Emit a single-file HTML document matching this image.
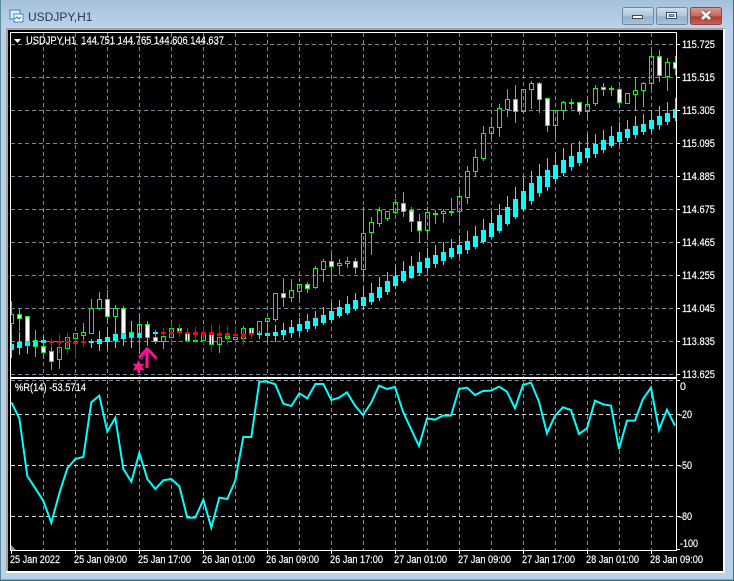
<!DOCTYPE html>
<html><head><meta charset="utf-8"><style>
html,body{margin:0;padding:0;background:#b9d1e8;width:734px;height:581px;overflow:hidden}
svg{display:block}
text{font-family:"Liberation Sans",sans-serif;font-size:10.6px;fill:#fff;stroke:#fff;stroke-width:.18px}
</style></head><body>
<svg id="s" xmlns="http://www.w3.org/2000/svg" width="734" height="581" viewBox="0 0 734 581">
<defs>
<linearGradient id="bg" x1="0" y1="0" x2="0" y2="1"><stop offset="0" stop-color="#a4c1da"/><stop offset="1" stop-color="#bcd3e9"/></linearGradient>
<linearGradient id="btn" x1="0" y1="0" x2="0" y2="1"><stop offset="0" stop-color="#cfdeeb"/><stop offset=".5" stop-color="#aec6dc"/><stop offset=".55" stop-color="#93b2cf"/><stop offset="1" stop-color="#a9c4dc"/></linearGradient>
<linearGradient id="cls" x1="0" y1="0" x2="0" y2="1"><stop offset="0" stop-color="#dc9a90"/><stop offset=".5" stop-color="#c9675b"/><stop offset=".55" stop-color="#b03a2e"/><stop offset="1" stop-color="#c8675a"/></linearGradient>
<clipPath id="mc"><rect x="11" y="33" width="665" height="344"/></clipPath>
<clipPath id="sc"><rect x="11" y="380" width="665" height="170"/></clipPath>
</defs>
<rect width="734" height="581" fill="#b9d1e8"/>
<rect width="734" height="28" fill="url(#bg)"/>
<rect x="0" y="0" width="1" height="581" fill="#5d8a9c"/>
<rect x="733" y="0" width="1" height="581" fill="#3f6f80"/>
<rect x="0" y="580" width="734" height="1" fill="#2f6c7c"/>
<rect x="1" y="579" width="732" height="1" fill="#7fb0c4"/>
<!-- title icon -->
<rect x="10" y="10" width="10" height="9" fill="#dfeefa" stroke="#3a87c8"/>
<rect x="14" y="14" width="9" height="8" fill="#fff" stroke="#3a87c8"/>
<path d="M15 19l2-2 2 2 2-2" fill="none" stroke="#2f6fb0"/>
<text x="28" y="21" style="font-size:12px;fill:#26384a;stroke:none">USDJPY,H1</text>
<!-- buttons -->
<rect x="622.5" y="7.5" width="31" height="17" rx="2" fill="url(#btn)" stroke="#76899b"/>
<rect x="656.5" y="7.5" width="31" height="17" rx="2" fill="url(#btn)" stroke="#76899b"/>
<rect x="690.5" y="7.5" width="31" height="17" rx="2" fill="url(#cls)" stroke="#8a4a46"/>
<rect x="632.5" y="15.5" width="10" height="3" fill="#fff" stroke="#3c4d5e"/>
<rect x="666.5" y="12.5" width="10" height="6" fill="none" stroke="#3c4d5e"/>
<rect x="667.5" y="13.5" width="8" height="4" fill="none" stroke="#fff"/>
<rect x="669.5" y="14.5" width="4" height="2" fill="#93b2cf" stroke="#3c4d5e" stroke-width=".6"/>
<path d="M702 11.5l8 7.5M710 11.5l-8 7.5" stroke="#5c5c5c" stroke-width="4.4" fill="none"/>
<path d="M702 11.5l8 7.5M710 11.5l-8 7.5" stroke="#f2f2f2" stroke-width="2.8" fill="none"/>
<!-- frame -->
<rect x="6" y="28" width="719" height="545" fill="#a3a3a3"/>
<rect x="723" y="29" width="2" height="544" fill="#f4f8fb"/>
<rect x="6" y="571" width="719" height="2" fill="#fff"/>
<rect x="8" y="30" width="715" height="541" fill="#000"/>
<g id="lines" shape-rendering="crispEdges">
<rect x="10" y="32" width="667" height="1" fill="#fff"/>
<rect x="10" y="32" width="1" height="519" fill="#fff"/>
<rect x="676" y="32" width="1" height="519" fill="#fff"/>
<rect x="10" y="377" width="667" height="2" fill="#fff"/>
<rect x="10" y="550" width="667" height="1" fill="#fff"/>
</g>
<g id="grid" shape-rendering="crispEdges"></g>
<g id="candles" clip-path="url(#mc)" shape-rendering="crispEdges"></g>
<!-- arrow + star -->
<g>
<path d="M139.5 358.5L147.5 349L156.5 358.5" fill="none" stroke="#9a1a70" stroke-width="3" transform="translate(.6 .8)"/>
<path d="M139 357.5L147 348.5L156 357.5" fill="none" stroke="#ff1493" stroke-width="2.4"/>
<path d="M147 349V368" stroke="#ff1493" stroke-width="3"/>
<polygon points="138.5,360 140.3,364 144.5,363.5 141.8,366.8 144.5,370.5 140.3,369.8 138.5,373.5 136.7,369.8 132.5,370.5 135.2,366.8 132.5,363.5 136.7,364" fill="#ff1493"/>
</g>
<!-- %R line -->
<g clip-path="url(#sc)">
<polyline transform="translate(0 375) scale(.33333)" fill="none" stroke="#00ffff" stroke-width="6" stroke-linejoin="miter" points="34,82 58,130 82,303 106,340 130,378 154,443 178,355 202,280 226,252 250,246 274,82 298,62 322,170 346,128 370,282 394,320 418,234 442,312 466,342 490,316 514,312 538,334 562,428 586,428 610,374 634,458 658,368 682,372 706,316 730,186 754,186 778,20 802,20 826,28 850,86 874,93 898,55 922,70 946,27 970,27 994,75 1018,68"/>
<polyline transform="translate(340 375) scale(.33333)" fill="none" stroke="#00ffff" stroke-width="6" stroke-linejoin="miter" points="-3,68 21,52 45,92 69,120 93,84 117,32 141,42 165,36 189,110 213,162 237,213 261,130 285,134 309,122 333,122 357,42 381,38 405,60 429,48 453,47 477,35 501,50 525,100 549,30 573,23 597,80 621,175 645,122 669,97 693,105 717,177 741,160 765,77 789,88 813,92 837,222 861,137 885,137 909,72 933,38 957,165 981,104 1005,152"/>
</g>
<polygon points="11,545 16,550 11,550" fill="#8a93a0"/>
<polygon points="14,39 21,39 17.5,43" fill="#fff"/>
<text x="26" y="44" textLength="198" lengthAdjust="spacingAndGlyphs" xml:space="preserve">USDJPY,H1  144.751 144.765 144.606 144.637</text>
<text x="15" y="391" textLength="71" lengthAdjust="spacingAndGlyphs">%R(14) -53.5714</text>
<g>
<text x="682" y="48" textLength="33" lengthAdjust="spacingAndGlyphs">115.725</text>
<text x="682" y="81" textLength="33" lengthAdjust="spacingAndGlyphs">115.515</text>
<text x="682" y="114" textLength="33" lengthAdjust="spacingAndGlyphs">115.305</text>
<text x="682" y="147" textLength="33" lengthAdjust="spacingAndGlyphs">115.095</text>
<text x="682" y="180" textLength="33" lengthAdjust="spacingAndGlyphs">114.885</text>
<text x="682" y="213" textLength="33" lengthAdjust="spacingAndGlyphs">114.675</text>
<text x="682" y="246" textLength="33" lengthAdjust="spacingAndGlyphs">114.465</text>
<text x="682" y="279" textLength="33" lengthAdjust="spacingAndGlyphs">114.255</text>
<text x="682" y="312" textLength="33" lengthAdjust="spacingAndGlyphs">114.045</text>
<text x="682" y="345" textLength="33" lengthAdjust="spacingAndGlyphs">113.835</text>
<text x="682" y="378" textLength="33" lengthAdjust="spacingAndGlyphs">113.625</text>
<text x="680" y="390">0</text>
<text x="679" y="418" textLength="13" lengthAdjust="spacingAndGlyphs">-20</text>
<text x="679" y="469" textLength="13" lengthAdjust="spacingAndGlyphs">-50</text>
<text x="679" y="520" textLength="13" lengthAdjust="spacingAndGlyphs">-80</text>
<text x="680" y="547" textLength="18" lengthAdjust="spacingAndGlyphs">-100</text>
</g>
<g>
<text x="10" y="563" textLength="50" lengthAdjust="spacingAndGlyphs">25 Jan 2022</text>
<text x="74" y="563" textLength="53" lengthAdjust="spacingAndGlyphs">25 Jan 09:00</text>
<text x="138" y="563" textLength="53" lengthAdjust="spacingAndGlyphs">25 Jan 17:00</text>
<text x="202" y="563" textLength="53" lengthAdjust="spacingAndGlyphs">26 Jan 01:00</text>
<text x="266" y="563" textLength="53" lengthAdjust="spacingAndGlyphs">26 Jan 09:00</text>
<text x="330" y="563" textLength="53" lengthAdjust="spacingAndGlyphs">26 Jan 17:00</text>
<text x="394" y="563" textLength="53" lengthAdjust="spacingAndGlyphs">27 Jan 01:00</text>
<text x="458" y="563" textLength="53" lengthAdjust="spacingAndGlyphs">27 Jan 09:00</text>
<text x="522" y="563" textLength="53" lengthAdjust="spacingAndGlyphs">27 Jan 17:00</text>
<text x="586" y="563" textLength="53" lengthAdjust="spacingAndGlyphs">28 Jan 01:00</text>
<text x="650" y="563" textLength="53" lengthAdjust="spacingAndGlyphs">28 Jan 09:00</text>
</g>
</svg>
<script>
var P="g314,323,301,333;w314,318,308,330;w316,341,316,345;g340,346,330,356;w346,352,340,358;w351,361,345,369;g347,359,347,368;g337,348,337,348;g333,338,333,338;g332,335,323,340;g308,333,299,333;g299,308,292,309;w299,316,290,323;g308,316,305,325;w308,333,306,334;g332,337,332,337;g324,337,313,353;w324,337,324,337;w337,341,330,343;g336,341,336,348;g328,337,328,337;w328,332,324,336;w332,340,332,342;g340,341,340,341;g333,340,333,340;w333,344,333,351;g337,344,337,352;g336,338,336,338;g337,339,337,339;g328,338,326,343;w328,333,328,333;g321,333,321,333;g318,321,318,340;g293,319,293,321;w293,297,278,306;g290,297,279,301;g284,291,284,298;w284,288,282,292;g268,287,266,288;g261,269,259,281;w261,266,254,282;g263,265,259,274;g261,263,257,267;w261,267,258,273;g233,269,207,280;g222,232,217,254;g210,223,207,226;g211,218,211,220;g202,212,199,213;w203,211,192,216;w210,221,207,231;w221,230,214,242;g212,230,207,235;g213,214,210,223;g211,213,209,222;g211,212,198,215;g196,211,190,221;g171,197,166,203;g157,171,149,176;g133,158,126,160;g127,133,117,138;g108,127,104,136;g99,109,89,116;w99,111,85,122;g89,111,89,113;g83,89,81,108;w83,99,82,112;w98,125,98,131;g110,125,110,137;g102,110,101,119;g102,103,99,108;w102,111,102,114;g104,111,96,119;g88,103,85,105;w87,89,83,95;g88,89,86,95;w89,102,87,107;g93,103,93,103;g90,94,77,110;g83,90,82,106;g56,83,50,88;w56,75,50,81;g62,76,58,90;w62,68,56,74".split(";");
var H="c344,349,334,357;c342,347,332,354;c341,345,332,353;c340,346,330,356;c340,342,336,346;r341,342,338,346;r341,342,334,352;r341,342,333,353;r342,343,333,358;r341,342,340,346;c341,342,339,347;c339,343,331,350;c337,341,327,348;c334,340,324,347;c333,338,322,345;c332,337,321,347;c333,337,325,345;c333,337,321,345;c332,333,330,343;r332,333,328,335;r332,333,323,342;r331,332,324,336;r332,333,328,342;r332,334,327,342;r332,334,326,343;r332,334,325,351;r333,335,325,343;r333,335,326,344;r334,335,326,345;r334,336,328,344;r333,334,329,338;c333,334,331,338;c333,335,323,341;c332,335,325,341;c330,334,323,339;c327,332,320,337;c324,330,318,335;c321,328,314,331;c318,325,311,328;c315,322,307,324;c311,319,303,322;c307,315,300,317;c304,312,296,314;c300,308,293,310;c297,305,287,309;c293,301,283,304;c287,297,277,300;c281,291,272,294;c276,285,266,288;c271,280,261,282;c266,277,256,278;c262,272,252,275;c258,267,248,270;c255,263,245,267;c252,260,242,264;c248,256,239,258;c245,253,235,256;c241,249,231,253;c236,246,226,248;c230,241,219,243;c223,236,212,238;c215,230,204,232;c207,223,196,225;c199,216,187,218;c191,208,177,210;c183,200,171,204;c176,192,164,196;c170,186,158,190;c165,178,152,182;c160,172,148,175;c156,166,144,170;c152,162,141,165;c148,157,134,161;c144,153,134,157;c140,149,130,152;c136,145,126,147;c132,141,122,144;c129,137,120,140;c126,134,116,138;c124,131,114,134;c120,128,110,132;c116,124,106,129;c113,121,102,124;c109,117,98,120".split(";");
function R(x,y,w,h,f){return '<rect x="'+x+'" y="'+y+'" width="'+w+'" height="'+h+'" fill="'+f+'"/>';}
var a='',b='',c='';
H.forEach(function(s,k){var t=s[0],v=s.slice(1).split(",").map(Number),x=11+8*k;
 var col=t=='c'?'#00ffff':'#ff0000',o=R(x,v[2],1,v[3]-v[2]+1,col)+R(x-2,v[0],5,v[1]-v[0]+1,col);
 if(t=='c')a+=o;else c+=o;});
P.forEach(function(s,k){var t=s[0],v=s.slice(1).split(",").map(Number),x=11+8*k,g='#00ff00';
 b+=R(x,v[2],1,v[0]-v[2]+1,g)+R(x,v[1],1,v[3]-v[1]+1,g);
 var h=v[1]-v[0];
 b+=R(x-2,v[0],5,1,g)+R(x-2,v[1],5,1,g)+R(x-2,v[0],1,h+1,g)+R(x+2,v[0],1,h+1,g);
 if(t=='w'&&h>1)b+=R(x-1,v[0]+1,3,h-1,'#ffffff');});
document.getElementById('candles').innerHTML=a+b+c;
var G='';
function L(x1,y1,x2,y2,col,d){return '<line x1="'+x1+'" y1="'+y1+'" x2="'+x2+'" y2="'+y2+'" stroke="'+col+'"'+(d?' stroke-dasharray="4 3"':'')+'/>';}
for(var x=43;x<=651;x+=32){G+=L(x+.5,33,x+.5,377,'#778899',1)+L(x+.5,380,x+.5,550,'#8a8a8a',1);}
for(var i=0;i<11;i++){var y=44+33*i;G+=L(11,y+.5,676,y+.5,'#778899',1)+L(677,y+.5,680,y+.5,'#ffffff');}
G+=L(11,380.5,676,380.5,'#8a8a8a',1);
[414,465,516].forEach(function(y){G+=L(11,y+.5,676,y+.5,'#d8d8d8',1)+L(677,y+.5,680,y+.5,'#ffffff');});
G+=L(677,380.5,680,380.5,'#ffffff')+L(677,549.5,680,549.5,'#ffffff');
for(var x=11;x<=651;x+=64){G+=L(x+.5,551,x+.5,554,'#ffffff');}
document.getElementById('grid').innerHTML=G;
</script>
</body></html>
